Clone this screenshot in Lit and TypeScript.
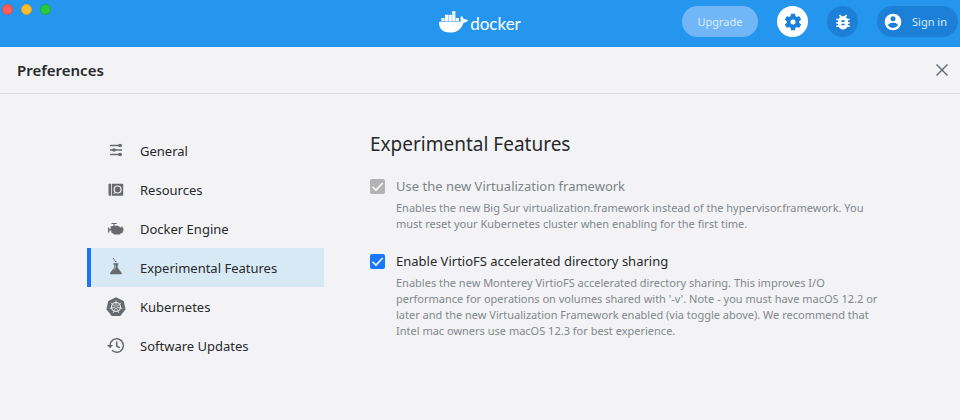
import { LitElement, html, css, svg } from "lit";
import { customElement, state } from "lit/decorators.js";
import { classMap } from "lit/directives/class-map.js";

const whale = html`<svg class="whale" viewBox="0 0 30 22" aria-hidden="true">
  <g fill="#fff">
    <path d="M0 11.500c0-.5.300-.8.800-.8H19.600c1.100 0 2-.3 2.600-.7-1-1.400-1-3.600.2-5.100 1.600 1 2.300 2.200 2.300 3.500 1.500-.3 3.200-.1 4.300.7-.8 1.900-2.400 2.600-4.500 2.600C22.500 18.100 18 21.500 10.800 21.500 3.500 21.500 0 17.600 0 11.500z"/>
    <path d="M2.400 7.100h3.200v3.200H2.400zM6 7.100h3.200v3.200H6zM9.600 7.100h3.200v3.200H9.600zM13.200 7.100h3.200v3.200h-3.200zM16.800 7.100H20v3.200h-3.200zM6 3.700h3.200v3.200H6zM9.600 3.700h3.200v3.200H9.600zM13.200 3.700h3.200v3.200h-3.200zM13.200.3h3.200v3.200h-3.200z"/>
  </g>
</svg>`;

const gear = html`<svg class="glyph20" viewBox="0 0 24 24" aria-hidden="true"><path fill="currentColor" d="M19.430 12.980c.04-.32.07-.64.07-.98s-.03-.66-.07-.98l2.110-1.650c.19-.15.24-.42.12-.64l-2-3.460c-.12-.22-.39-.3-.61-.22l-2.490 1c-.52-.4-1.080-.73-1.690-.98l-.38-2.650C14.460 2.180 14.250 2 14 2h-4c-.25 0-.46.18-.49.42l-.38 2.650c-.61.25-1.170.59-1.690.98l-2.490-1c-.23-.09-.49 0-.61.22l-2 3.460c-.13.22-.07.49.12.64l2.110 1.650c-.04.32-.07.65-.07.98s.03.66.07.98l-2.110 1.650c-.19.15-.24.42-.12.64l2 3.460c.12.22.39.3.61.22l2.490-1c.52.4 1.080.73 1.690.98l.38 2.650c.03.24.24.42.49.42h4c.25 0 .46-.18.49-.42l.38-2.650c.61-.25 1.170-.59 1.690-.98l2.490 1c.23.09.49 0 .61-.22l2-3.460c.12-.22.07-.49-.12-.64l-2.110-1.650zM12 15a3 3 0 1 1 0-6 3 3 0 0 1 0 6z"/></svg>`;

const bug = html`<svg class="glyph20" viewBox="0 0 24 24" aria-hidden="true"><path fill="currentColor" d="M20 8h-2.810c-.45-.78-1.070-1.450-1.820-1.960L17 4.410 15.590 3l-2.170 2.170C12.960 5.060 12.490 5 12 5s-.96.06-1.410.17L8.410 3 7 4.410l1.620 1.630C7.880 6.550 7.260 7.220 6.810 8H4v2h2.090c-.05.33-.09.66-.09 1v1H4v2h2v1c0 .34.04.67.09 1H4v2h2.810c1.040 1.790 2.970 3 5.190 3s4.150-1.210 5.190-3H20v-2h-2.090c.05-.33.09-.66.09-1v-1h2v-2h-2v-1c0-.34-.04-.67-.09-1H20V8zm-6 8h-4v-2h4v2zm0-4h-4v-2h4v2z"/></svg>`;

const account = html`<svg class="glyph20" viewBox="0 0 24 24" aria-hidden="true"><path fill="currentColor" d="M12 2a10 10 0 1 0 0 20 10 10 0 0 0 0-20zm0 3a3 3 0 1 1 0 6 3 3 0 0 1 0-6zm0 14.200c-2.500 0-4.710-1.280-6-3.220.03-1.990 4-3.080 6-3.080s5.970 1.090 6 3.080a7.200 7.200 0 0 1-6 3.220z"/></svg>`;

const cross = html`<svg class="cross" viewBox="0 0 12 12" aria-hidden="true"><path d="M.5.5l11 11M11.500.5l-11 11" stroke="currentColor" stroke-width="1.400" fill="none"/></svg>`;

const spokes = [0, 1, 2, 3, 4, 5, 6].map((i) => {
  const a = (i * 2 * Math.PI) / 7 - Math.PI / 2;
  return svg`<path d=${`M10 10L${10 + 6.5 * Math.cos(a)} ${10 + 6.5 * Math.sin(a)}`}/>`;
});

const items = [
  {
    label: "General",
    icon: svg`<path fill="none" stroke="currentColor" stroke-width="1.400" d="M4 4.500h12M4 9h12M4 13.500h12"/><g fill="currentColor"><circle cx="14" cy="4.500" r="1.800"/><circle cx="8" cy="9" r="1.800"/><circle cx="14" cy="13.500" r="1.800"/></g>`,
  },
  {
    label: "Resources",
    icon: svg`<path fill="currentColor" d="M3.300 3.800H5.200v12H3.300a.8.800 0 0 1-.8-.8V4.600a.8.800 0 0 1 .8-.8zM6 3.800h10.400a.8.800 0 0 1 .8.800V15a.8.800 0 0 1-.8.800H6z"/><circle cx="11.600" cy="9.500" r="3.500" fill="none" stroke="#f3f3f5" stroke-width="1.200"/><path d="M7.700 14l2-2" stroke="#f3f3f5"/>`,
  },
  {
    label: "Docker Engine",
    icon: svg`<path fill="currentColor" d="M5.500 4h5.200v1H8.600v1.800h3.600l1.700 1.200 1.400.8V7.500h1.300V9h.8v3.500h-.8v1.800h-1.300v-.8l-1.300 2.100H8.400L5.200 13.200V11.500H3.300v2H2V8.400h1.300v1.700h1.300V7.600l2.900-.8V5h-2z"/>`,
  },
  {
    label: "Experimental Features",
    icon: svg`<path fill="currentColor" d="M7.200 5.300h5.200v1.300h-.7v3.100l3.900 5c.5.700.1 1.500-.7 1.500H4.900c-.8 0-1.200-.8-.7-1.500l3.900-5V6.600h-.9zM8.900 3h1.600v1.300H8.900zM7.500 1.400H9v1H7.500zM6.800.1h1v.8h-1z"/><path d="M9.200 6.700v3.400l-1.300 1.600" fill="none" stroke="#d8e9f6" stroke-width=".7"/>`,
  },
  {
    label: "Kubernetes",
    icon: svg`<path fill="currentColor" d="M10 .2l7.700 3.700 1.900 8.300-5.300 6.700H5.700L.4 12.200 2.300 3.900z"/><g fill="none" stroke="#f3f3f5" stroke-width=".8">${spokes}<circle cx="10" cy="10" r="4.500" stroke-width="1.200"/></g><circle cx="10" cy="10" r="1" fill="currentColor"/>`,
  },
  {
    label: "Software Updates",
    icon: svg`<path fill="none" stroke="currentColor" stroke-width="1.500" d="M4 9.500a6.700 6.700 0 1 1 2 4.800M10.700 5.500V10l3 1.900"/><path fill="currentColor" d="M1 9h6.100l-3 3.300z"/>`,
  },
];

const features = [
  {
    id: "virtualization",
    label: "Use the new Virtualization framework",
    text: "Enables the new Big Sur virtualization.framework instead of the hypervisor.framework. You must reset your Kubernetes cluster when enabling for the first time.",
    disabled: true,
  },
  {
    id: "virtiofs",
    label: "Enable VirtioFS accelerated directory sharing",
    text: "Enables the new Monterey VirtioFS accelerated directory sharing. This improves I/O performance for operations on volumes shared with '-v'. Note - you must have macOS 12.2 or later and the new Virtualization Framework enabled (via toggle above). We recommend that Intel mac owners use macOS 12.3 for best experience.",
    disabled: false,
  },
];

@customElement("app-root")
export class AppRoot extends LitElement {
  @state() private current = "Experimental Features";

  static styles = css`
    :host {
      display: block;
      min-height: 100vh;
      background: #f3f3f5;
      color: #27292b;
      font: 13px/20px "Noto Sans", sans-serif;
    }
    * { box-sizing: border-box; }
    svg { display: block; flex: none; }
    button {
      border: 0;
      margin: 0;
      padding: 0;
      background: none;
      color: inherit;
      font: inherit;
      cursor: pointer;
    }
    .top {
      display: grid;
      grid-template-columns: 1fr auto 1fr;
      height: 47px;
      background: #2496ed;
      color: #fff;
    }
    .lights { display: flex; gap: 8px; padding: 4px 0 0 2px; }
    .light {
      width: 11px;
      height: 11px;
      border-radius: 50%;
      border: 1px solid #de4a45;
      background: #ff5f57;
    }
    .min { background: #febc2e; border-color: #dfa023; }
    .max { background: #28c840; border-color: #1dad2b; }
    .brand { display: flex; align-items: center; gap: 1px; }
    .whale { width: 30px; height: 22px; margin-bottom: 4px; }
    .word { font: 17px/20px Lato, sans-serif; }
    .actions {
      display: flex;
      align-items: center;
      justify-content: flex-end;
      padding: 0 2px 4px 0;
      gap: 19px;
      font-size: 11px;
    }
    .pill {
      display: flex;
      align-items: center;
      justify-content: center;
      height: 31px;
      border-radius: 16px;
      background: #1c80d9;
      color: #d8ecfc;
    }
    .upgrade { width: 76px; background: #71b7f7; color: #d9edff; }
    .round { width: 31px; color: #fff; }
    .active { background: #fff; color: #1c80d9; }
    .signin { width: 81px; gap: 9px; padding-right: 5px; }
    .signin svg { color: #fff; }
    .glyph20 { width: 20px; height: 20px; }
    .bar {
      display: flex;
      align-items: center;
      justify-content: space-between;
      height: 47px;
      padding: 0 12px 0 17px;
      border-bottom: 1px solid #dcdde0;
    }
    .title { margin: 0; font-size: 15px; font-weight: 600; }
    .cross { width: 12px; height: 12px; color: #5f666c; }
    .main {
      display: grid;
      grid-template-columns: 237px minmax(0, 1fr);
      gap: 46px;
      padding: 37px 75px 20px 87px;
    }
    .nav { display: flex; flex-direction: column; }
    .item {
      display: flex;
      align-items: center;
      gap: 14px;
      height: 39px;
      padding-left: 15px;
      border-left: 4px solid transparent;
      text-align: left;
    }
    .item svg { width: 20px; height: 20px; color: #66696d; }
    .current { background: #d8e9f6; border-color: #1a73f8; }
    .heading { margin: 0 0 19px; font-size: 19px; line-height: 26px; font-weight: 400; }
    .feature {
      display: grid;
      grid-template-columns: 15px minmax(0, 1fr);
      column-gap: 11px;
      row-gap: 4px;
      align-items: center;
      margin-bottom: 19px;
    }
    .tick { display: grid; }
    .tick > * { grid-area: 1 / 1; }
    .box {
      appearance: none;
      width: 15px;
      height: 15px;
      margin: 0;
      border-radius: 2px;
      background: #fff;
      box-shadow: inset 0 0 0 1px #9aa0a6;
    }
    .box:checked { background: #1a78ff; box-shadow: none; }
    .box:disabled { background: #b3b3b3; }
    .mark { width: 15px; height: 15px; pointer-events: none; }
    .label { font-size: 13px; }
    .off { color: #7d8389; }
    .text {
      grid-column: 2;
      margin: 0;
      font-size: 11px;
      line-height: 16px;
      color: #81878c;
    }
  `;

  render() {
    return html`
      <header class="top">
        <div class="lights"><span class="light"></span><span class="light min"></span><span class="light max"></span></div>
        <div class="brand">${whale}<span class="word">docker</span></div>
        <div class="actions">
          <button class="pill upgrade">Upgrade</button>
          <button class="pill round active" aria-label="Settings">${gear}</button>
          <button class="pill round" aria-label="Troubleshoot">${bug}</button>
          <button class="pill signin">${account}Sign in</button>
        </div>
      </header>
      <div class="bar">
        <h1 class="title">Preferences</h1>
        <button aria-label="Close">${cross}</button>
      </div>
      <div class="main">
        <nav class="nav">
          ${items.map(
            (item) => html`<button
              class=${classMap({ item: true, current: item.label === this.current })}
              @click=${() => (this.current = item.label)}
            ><svg viewBox="0 0 20 20" aria-hidden="true">${item.icon}</svg>${item.label}</button>`
          )}
        </nav>
        <main>
          <h2 class="heading">Experimental Features</h2>
          ${features.map(
            (f) => html`<div class="feature">
              <span class="tick">
                <input class="box" type="checkbox" id=${f.id} checked ?disabled=${f.disabled} />
                <svg class="mark" viewBox="0 0 15 15" aria-hidden="true"><path d="M2.500 7.700l3.500 3.400 6.700-7" fill="none" stroke="#fff" stroke-width="1.500"/></svg>
              </span>
              <label class=${classMap({ label: true, off: f.disabled })} for=${f.id}>${f.label}</label>
              <p class="text">${f.text}</p>
            </div>`
          )}
        </main>
      </div>
    `;
  }
}
